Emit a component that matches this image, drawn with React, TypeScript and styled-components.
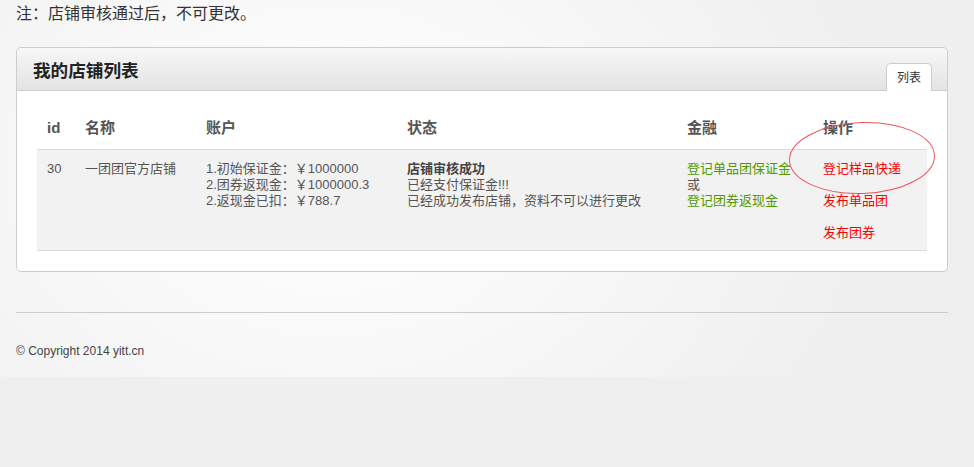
import React from "react";
import styled, { createGlobalStyle } from "styled-components";

const GlobalStyle = createGlobalStyle`
    html, body {
        margin: 0;
        padding: 0;
        background: #efefef;
        font-family: "Liberation Sans", "Noto Sans CJK SC", sans-serif;
        color: #555;
    }
`;

const Page = styled.div`
    height: 377px;
    background: radial-gradient(ellipse 560px 420px at 330px 170px, #ffffff 0%, #f8f8f8 45%, #efefef 100%);
`;

const Wrap = styled.div`
    width: 932px;
    margin-left: 16px;
    padding-top: 4px;
`;

const Notice = styled.p`
    margin: 0;
    font-size: 16px;
    line-height: 20px;
    color: #333;
`;

const Box = styled.div`
    position: relative;
    margin-top: 23px;
    border: 1px solid #cdcdcd;
    border-radius: 5px;
    background: #fff;
`;

const BoxHeader = styled.div`
    display: flex;
    align-items: flex-end;
    justify-content: space-between;
    height: 42px;
    padding: 0 15px 0 16px;
    border-bottom: 1px solid #cdcdcd;
    border-radius: 5px 5px 0 0;
    background: linear-gradient(#f7f7f7, #e3e3e3);
`;

const Title = styled.h2`
    align-self: center;
    margin: 0;
    font-size: 17.6px;
    font-weight: bold;
    color: #222;
`;

const Tab = styled.div`
    width: 44px;
    height: 27px;
    margin-bottom: -1px;
    border: 1px solid #cdcdcd;
    border-bottom: none;
    border-radius: 5px 5px 0 0;
    background: #fff;
    font-size: 12px;
    line-height: 29px;
    text-align: center;
    color: #333;
`;

const BoxBody = styled.div`
    padding: 19px 19px 20px 20px;
`;

const Table = styled.table`
    width: 890px;
    border-collapse: collapse;
    table-layout: fixed;
`;

/* $w is the column's outer width; padding is taken off it */
const HeadCell = styled.th<{ $w: number }>`
    width: ${(p) => p.$w - 20}px;
    padding: 8px 10px 11px;
    border-bottom: 1px solid #dcdcdc;
    font-size: 15px;
    line-height: 20px;
    font-weight: bold;
    text-align: left;
    color: #555;
`;

const Row = styled.tr`
    background: #f2f2f2;
    border-bottom: 1px solid #dcdcdc;
`;

const Cell = styled.td`
    padding: 11px 10px 9px;
    vertical-align: top;
    font-size: 13px;
    line-height: 16px;
    color: #555;
`;

const Line = styled.div<{ $bold?: boolean }>`
    font-weight: ${(p) => (p.$bold ? "bold" : "normal")};
    color: ${(p) => (p.$bold ? "#444" : "#555")};
    white-space: nowrap;
`;

const GreenLink = styled.a`
    display: block;
    color: #4f9a00;
    text-decoration: none;
    white-space: nowrap;
`;

const RedLink = styled.a`
    display: block;
    margin-bottom: 16px;
    color: #ff0000;
    text-decoration: none;
    white-space: nowrap;

    &:last-child {
        margin-bottom: 0;
    }
`;

const Circle = styled.svg`
    position: absolute;
    left: 771px;
    top: 73px;
    pointer-events: none;
`;

const Rule = styled.hr`
    margin: 40px 0 0;
    border: none;
    border-top: 1px solid #cccccc;
    height: 0;
`;

const Footer = styled.p`
    margin: 31px 0 0;
    font-size: 12px;
    line-height: 14px;
    color: #444;
`;

const App: React.FC = () => {
    return (
        <Page>
            <GlobalStyle />
            <Wrap>
                <Notice>注：店铺审核通过后，不可更改。</Notice>
                <Box>
                    <BoxHeader>
                        <Title>我的店铺列表</Title>
                        <Tab>列表</Tab>
                    </BoxHeader>
                    <BoxBody>
                        <Table>
                            <thead>
                                <tr>
                                    <HeadCell $w={38}>id</HeadCell>
                                    <HeadCell $w={121}>名称</HeadCell>
                                    <HeadCell $w={201}>账户</HeadCell>
                                    <HeadCell $w={280}>状态</HeadCell>
                                    <HeadCell $w={136}>金融</HeadCell>
                                    <HeadCell $w={114}>操作</HeadCell>
                                </tr>
                            </thead>
                            <tbody>
                                <Row>
                                    <Cell>30</Cell>
                                    <Cell>
                                        <Line>一团团官方店铺</Line>
                                    </Cell>
                                    <Cell>
                                        <Line>1.初始保证金：￥1000000</Line>
                                        <Line>2.团券返现金：￥1000000.3</Line>
                                        <Line>2.返现金已扣：￥788.7</Line>
                                    </Cell>
                                    <Cell>
                                        <Line $bold>店铺审核成功</Line>
                                        <Line>已经支付保证金!!!</Line>
                                        <Line>已经成功发布店铺，资料不可以进行更改</Line>
                                    </Cell>
                                    <Cell>
                                        <GreenLink href="#">登记单品团保证金</GreenLink>
                                        <Line>或</Line>
                                        <GreenLink href="#">登记团券返现金</GreenLink>
                                    </Cell>
                                    <Cell>
                                        <RedLink href="#">登记样品快递</RedLink>
                                        <RedLink href="#">发布单品团</RedLink>
                                        <RedLink href="#">发布团券</RedLink>
                                    </Cell>
                                </Row>
                            </tbody>
                        </Table>
                    </BoxBody>
                    <Circle width="148" height="74" viewBox="0 0 148 74">
                        <ellipse
                            cx="74"
                            cy="37"
                            rx="72.5"
                            ry="35.5"
                            fill="none"
                            stroke="#e8575f"
                            strokeWidth="1"
                            transform="rotate(-2 74 37)"
                        />
                    </Circle>
                </Box>
                <Rule />
                <Footer>© Copyright 2014 yitt.cn</Footer>
            </Wrap>
        </Page>
    );
};

export default App;
